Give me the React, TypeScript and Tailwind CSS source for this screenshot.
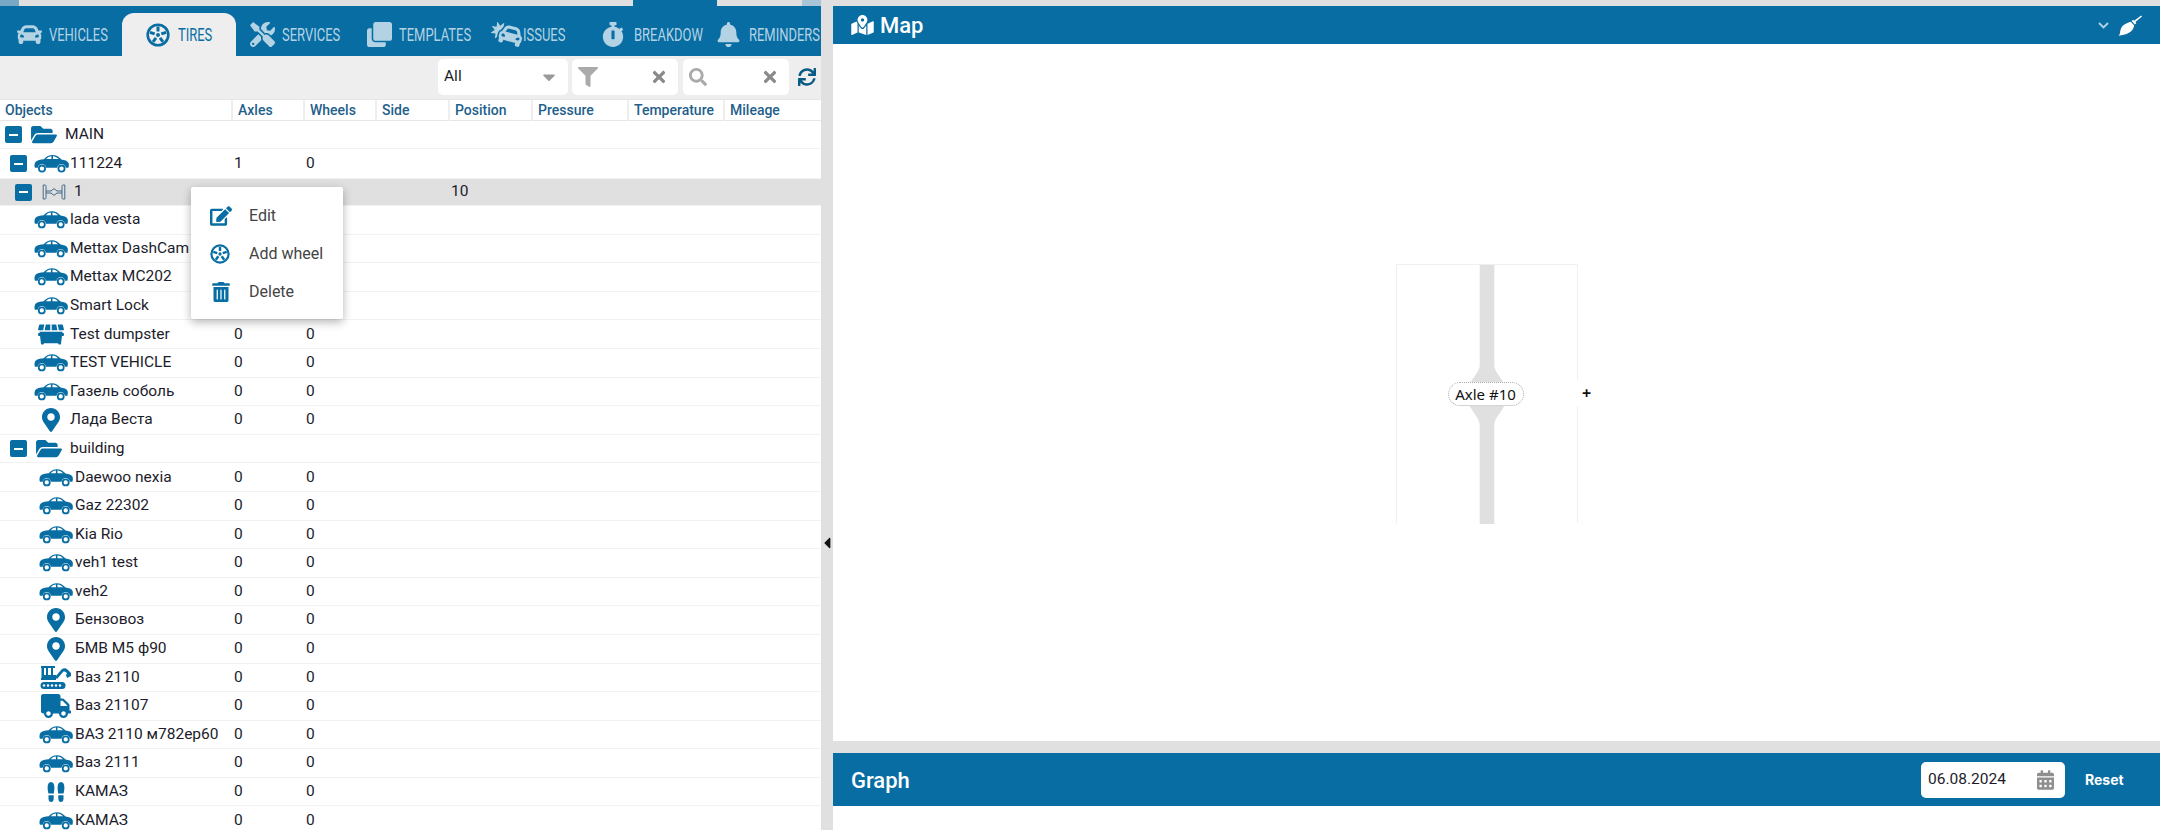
import React from 'react';
import {
  FaCar, FaTools, FaClone, FaCarCrash, FaStopwatch, FaBell, FaFolderOpen, FaFilter, FaSearch, FaTimes,
  FaSync, FaEdit, FaTrashAlt, FaDumpster, FaMapMarkerAlt, FaTruck, FaMapMarkedAlt,
  FaCalendarAlt, FaCaretDown, FaCaretLeft,
} from 'react-icons/fa';

const Wheel = ({ className }: { className?: string }) => (
  <svg viewBox="0 0 24 24" className={className} fill="none" stroke="currentColor">
    <circle cx="12" cy="12" r="10.3" strokeWidth="2.6" />
    <circle cx="12" cy="12" r="2" fill="currentColor" stroke="none" />
    <g strokeWidth="3">
      <path d="M12 3.5V8.5" />
      <path d="M3.9 9.4L8.7 10.9" />
      <path d="M20.1 9.4L15.3 10.9" />
      <path d="M7 18.9L10 14.8" />
      <path d="M17 18.9L14 14.8" />
    </g>
  </svg>
);

const Sedan = () => (
  <svg viewBox="0 0 35 19" className="w-[35px] h-[19px] text-[#076da3]" fill="currentColor">
    <path d="M10 5.2C12.5 2.2 15 1 18.5 1C22 1 24.5 2.4 27.4 5.4C30.6 5.8 33.6 6.8 34.6 9C35 10 35 12 34.4 13.8H31.8C31.2 11.2 29.6 10 27.5 10C25.4 10 23.6 11.2 23.2 13.8H12.2C11.8 11.2 10 10 8 10C6 10 4.2 11.2 3.8 13.8H1C0.2 12.4 0.4 9.6 1.4 8C3 6.2 6.6 5.6 10 5.2Z" />
    <path d="M12 5.1C13.6 3.2 15 2.4 17.4 2.2V5.1ZM19 2.2C21.4 2.4 23.2 3.4 24.8 5.1H19Z" fill="#fff" />
    <circle cx="8" cy="14.6" r="3.1" fill="none" stroke="currentColor" strokeWidth="1.8" />
    <circle cx="27.5" cy="14.6" r="3.1" fill="none" stroke="currentColor" strokeWidth="1.8" />
  </svg>
);

const Axle = () => (
  <svg viewBox="0 0 24 16" className="w-[24px] h-[16px] text-[#3f6a86]" fill="none" stroke="currentColor" strokeWidth="1">
    <path d="M3 1H1.2V15H3C4 15 4 14 4 13V3C4 2 4 1 3 1Z" />
    <path d="M21 1H22.8V15H21C20 15 20 14 20 13V3C20 2 20 1 21 1Z" />
    <path d="M4 7H9L12 4.6L15 7H20M4 9H9L12 11.4L15 9H20" />
  </svg>
);

const Excavator = () => (
  <svg viewBox="0 0 32 24" className="w-[32px] h-[24px] text-[#076da3]" fill="currentColor">
    <path d="M1 1H15V3H13V10H16V15H1V13H1.5V3H1ZM4 3V10H6V3ZM8 3V10H11V3Z" fillRule="evenodd" />
    <path d="M15 12L22 4C24 3 26 3 28 5L31 8V11L27 13L26 10L27 8.5C25.5 6.5 24 6 23 7L17 14Z" />
    <rect x="0.5" y="17" width="25" height="7" rx="3.5" />
    <g fill="#fff">
      <circle cx="4" cy="20.5" r="1.2" />
      <circle cx="8" cy="20.5" r="1.2" />
      <circle cx="12" cy="20.5" r="1.2" />
      <circle cx="16" cy="20.5" r="1.2" />
      <circle cx="20" cy="20.5" r="1.2" />
    </g>
  </svg>
);

const Footprints = () => (
  <svg viewBox="0 0 18 20" className="w-[18px] h-[20px] text-[#076da3]" fill="currentColor">
    <path d="M4 0C6.2 0 7.4 2.4 7.4 5.4C7.4 8 7 10 6.8 11.4H1.4C1.1 9.8 0.6 8 0.6 5.6C0.6 2.4 1.8 0 4 0Z" />
    <path d="M1.5 13.2H6.7V16.4C6.7 18.6 5.6 20 4.1 20C2.6 20 1.5 18.6 1.5 16.4Z" />
    <path d="M14 0C11.8 0 10.6 2.4 10.6 5.4C10.6 8 11 10 11.2 11.4H16.6C16.9 9.8 17.4 8 17.4 5.6C17.4 2.4 16.2 0 14 0Z" />
    <path d="M16.5 13.2H11.3V16.4C11.3 18.6 12.4 20 13.9 20C15.4 20 16.5 18.6 16.5 16.4Z" />
  </svg>
);

const Brush = () => (
  <svg viewBox="0 0 24 21" className="w-[24px] h-[21px] text-white" fill="currentColor">
    <path d="M23.2 0.4L24 1.4L17.4 7L18.4 8.2L16.9 9.6L13.6 6L15.1 4.7L16.1 5.8Z" />
    <path d="M12.8 6.8L16.2 10.6C15.6 14.6 12.4 19.6 0.6 20.8C2.6 18.6 1.6 16.8 3 13.4C4.4 10 8.8 8 12.8 6.8Z" />
  </svg>
);

const tabs = [
  { label: 'VEHICLES', icon: <FaCar className="w-[25px] h-[25px]" />, pad: 'pl-[9px]' },
  { label: 'TIRES', icon: <Wheel className="w-[24px] h-[24px]" />, pad: 'pl-[24px]', active: true },
  { label: 'SERVICES', icon: <FaTools className="w-[25px] h-[25px]" />, pad: 'pl-[14px]' },
  { label: 'TEMPLATES', icon: <FaClone className="w-[25px] h-[25px]" />, pad: 'pl-[17px]' },
  { label: 'ISSUES', icon: <FaCarCrash className="w-[31px] h-[25px]" />, pad: 'pl-[27px]' },
  { label: 'BREAKDOW', icon: <FaStopwatch className="w-[22px] h-[25px]" />, pad: 'pl-[24px]' },
  { label: 'REMINDERS', icon: <FaBell className="w-[23px] h-[25px]" />, pad: 'pl-[25px]' },
];

const columns = ['Objects', 'Axles', 'Wheels', 'Side', 'Position', 'Pressure', 'Temperature', 'Mileage'];
const gridCols = 'grid grid-cols-[233px_72px_72px_73px_83px_96px_96px_96px]';

const marker = <FaMapMarkerAlt className="w-[18px] h-[24px] text-[#076da3]" />;
const folder = <FaFolderOpen className="w-[26px] h-[23px] text-[#076da3]" />;

type Row = {
  name: string;
  icon: React.ReactNode;
  kind: 'main' | 'car' | 'axle' | 'group' | 'leaf' | 'subleaf';
  axles?: string;
  wheels?: string;
  position?: string;
  height?: string;
};

const rows: Row[] = [
  { name: 'MAIN', icon: folder, kind: 'main', height: 'h-[28px]' },
  { name: '111224', icon: <Sedan />, kind: 'car', axles: '1', wheels: '0', height: 'h-[30px]' },
  { name: '1', icon: <Axle />, kind: 'axle', position: '10', height: 'h-[27px]' },
  { name: 'lada vesta', icon: <Sedan />, kind: 'leaf' },
  { name: 'Mettax DashCam', icon: <Sedan />, kind: 'leaf' },
  { name: 'Mettax MC202', icon: <Sedan />, kind: 'leaf' },
  { name: 'Smart Lock', icon: <Sedan />, kind: 'leaf' },
  { name: 'Test dumpster', icon: <FaDumpster className="w-[26px] h-[23px] text-[#076da3]" />, kind: 'leaf', axles: '0', wheels: '0' },
  { name: 'TEST VEHICLE', icon: <Sedan />, kind: 'leaf', axles: '0', wheels: '0' },
  { name: 'Газель соболь', icon: <Sedan />, kind: 'leaf', axles: '0', wheels: '0' },
  { name: 'Лада Веста', icon: marker, kind: 'leaf', axles: '0', wheels: '0' },
  { name: 'building', icon: folder, kind: 'group' },
  { name: 'Daewoo nexia', icon: <Sedan />, kind: 'subleaf', axles: '0', wheels: '0' },
  { name: 'Gaz 22302', icon: <Sedan />, kind: 'subleaf', axles: '0', wheels: '0' },
  { name: 'Kia Rio', icon: <Sedan />, kind: 'subleaf', axles: '0', wheels: '0' },
  { name: 'veh1 test', icon: <Sedan />, kind: 'subleaf', axles: '0', wheels: '0' },
  { name: 'veh2', icon: <Sedan />, kind: 'subleaf', axles: '0', wheels: '0' },
  { name: 'Бензовоз', icon: marker, kind: 'subleaf', axles: '0', wheels: '0' },
  { name: 'БМВ М5 ф90', icon: marker, kind: 'subleaf', axles: '0', wheels: '0' },
  { name: 'Ваз 2110', icon: <Excavator />, kind: 'subleaf', axles: '0', wheels: '0' },
  { name: 'Ваз 21107', icon: <FaTruck className="w-[30px] h-[24px] text-[#076da3]" />, kind: 'subleaf', axles: '0', wheels: '0' },
  { name: 'ВАЗ 2110 м782ер60', icon: <Sedan />, kind: 'subleaf', axles: '0', wheels: '0' },
  { name: 'Ваз 2111', icon: <Sedan />, kind: 'subleaf', axles: '0', wheels: '0' },
  { name: 'КАМАЗ', icon: <Footprints />, kind: 'subleaf', axles: '0', wheels: '0' },
  { name: 'КАМАЗ', icon: <Sedan />, kind: 'subleaf', axles: '0', wheels: '0' },
];

const Toggle = () => (
  <span className="w-[17px] h-[17px] shrink-0 rounded-[2px] bg-[#076da3] flex items-center justify-center">
    <span className="w-[9px] h-[2px] bg-white" />
  </span>
);

const ObjectCell = ({ row }: { row: Row }) => {
  if (row.kind === 'main') {
    return (
      <div className="flex items-center pl-[5px]">
        <Toggle />
        <span className="w-[43px] pl-[9px] flex">{row.icon}</span>
        <span>{row.name}</span>
      </div>
    );
  }
  if (row.kind === 'car') {
    return (
      <div className="flex items-center pl-[10px]">
        <Toggle />
        <span className="w-[43px] pl-[7px] flex">{row.icon}</span>
        <span>{row.name}</span>
      </div>
    );
  }
  if (row.kind === 'axle') {
    return (
      <div className="flex items-center pl-[15px]">
        <Toggle />
        <span className="w-[42px] pl-[10px] flex">{row.icon}</span>
        <span>{row.name}</span>
      </div>
    );
  }
  if (row.kind === 'group') {
    return (
      <div className="flex items-center pl-[10px]">
        <Toggle />
        <span className="w-[43px] pl-[9px] flex">{row.icon}</span>
        <span>{row.name}</span>
      </div>
    );
  }
  return (
    <div className={`flex items-center ${row.kind === 'leaf' ? 'pl-[34px]' : 'pl-[39px]'}`}>
      <span className="w-[36px] flex justify-center pr-[2px]">{row.icon}</span>
      <span className="whitespace-nowrap">{row.name}</span>
    </div>
  );
};

const ContextMenu = () => (
  <div className="absolute left-[191px] top-[181px] w-[152px] h-[132px] bg-white rounded-[2px] shadow-[0_3px_10px_rgba(0,0,0,0.3)] py-[10px] text-[16px] text-[#444]">
    <div className="h-[38px] flex items-center pl-[19px] gap-[17px]">
      <FaEdit className="w-[22px] h-[20px] text-[#076da3]" />
      <span>Edit</span>
    </div>
    <div className="h-[38px] flex items-center pl-[19px] gap-[17px]">
      <Wheel className="w-[20px] h-[20px] text-[#076da3] mr-[2px]" />
      <span>Add wheel</span>
    </div>
    <div className="h-[38px] flex items-center pl-[21px] gap-[19px]">
      <FaTrashAlt className="w-[18px] h-[20px] text-[#076da3]" />
      <span>Delete</span>
    </div>
  </div>
);

const AxleDiagram = () => (
  <div className="relative w-[182px] h-[259px] border border-b-0 border-[#efefef]">
    <svg viewBox="0 0 60 259" className="absolute left-[60px] top-0 w-[60px] h-[259px] text-[#e0e0e0]" fill="currentColor">
      <path d="M22.7 0H37.3V100C37.3 108 46 112 52 130C46 148 37.3 152 37.3 160V259H22.7V160C22.7 152 14 148 8 130C14 112 22.7 108 22.7 100Z" />
    </svg>
    <div className="absolute left-[51px] top-[117px] w-[76px] h-[24px] rounded-full bg-white border border-dotted border-[#aaa] flex items-center justify-center text-[15px] text-[#111] font-['Noto_Sans',sans-serif]">
      Axle #10
    </div>
    <div className="absolute left-[176px] top-[115px] w-[28px] h-[26px] bg-white flex items-center justify-center text-[16px] font-bold text-[#111] font-['Noto_Sans',sans-serif]">
      +
    </div>
  </div>
);

export default function App() {
  return (
    <div className="w-[2160px] h-[830px] overflow-hidden flex flex-col bg-[#e0e0e0] font-['Roboto',sans-serif] text-[#1c1c2b]">
      <div className="h-[6px] shrink-0 flex">
        <div className="w-[19px] bg-[#7aa9c8]" />
        <div className="w-[614px]" />
        <div className="w-[84px] bg-[#076da3]" />
        <div className="w-[85px]" />
        <div className="w-[19px] bg-[#a9c4d6]" />
      </div>
      <div className="flex flex-1 min-h-0">
        {/* Left: objects tree */}
        <div className="relative w-[821px] shrink-0 flex flex-col bg-white overflow-hidden">
          <div className="h-[50px] shrink-0 bg-[#076da3] flex items-end pl-[8px] overflow-hidden">
            {tabs.map((tab) => (
              <div
                key={tab.label}
                className={`w-[114px] h-[43px] shrink-0 flex items-center ${tab.pad} ${tab.active ? 'bg-[#eeeeee] rounded-t-[12px] text-[#076da3]' : 'text-[#b3d3e4]'}`}
              >
                <span className="w-[32px] shrink-0 flex">{tab.icon}</span>
                <span className="w-0 whitespace-nowrap text-[18px] leading-none origin-left scale-x-[0.72]">{tab.label}</span>
              </div>
            ))}
          </div>

          <div className="h-[43px] shrink-0 bg-[#eeeeee] flex items-center justify-end gap-[4px] pr-[5px] pb-[1px]">
            <div className="w-[130px] h-[36px] bg-white rounded-[5px] flex items-center justify-between pl-[6px] pr-[9px] text-[15.5px]">
              <span>All</span>
              <FaCaretDown className="w-[20px] h-[20px] text-[#999]" />
            </div>
            <div className="w-[106px] h-[36px] bg-white rounded-[5px] flex items-center justify-between pl-[6px] pr-[10px]">
              <FaFilter className="w-[20px] h-[20px] text-[#aaa]" />
              <FaTimes className="w-[18px] h-[18px] text-[#8a8a8a]" />
            </div>
            <div className="w-[106px] h-[36px] bg-white rounded-[5px] flex items-center justify-between pl-[6px] pr-[10px] ml-[1px]">
              <FaSearch className="w-[18px] h-[18px] text-[#aaa]" />
              <FaTimes className="w-[18px] h-[18px] text-[#8a8a8a]" />
            </div>
            <FaSync className="w-[18px] h-[18px] text-[#0b5a85] ml-[5px]" />
          </div>

          <div className={`${gridCols} h-[22px] shrink-0 border-y border-[#e6e6e6] text-[14px] font-medium text-[#1f5f8b] items-center`}>
            {columns.map((col, i) => (
              <div key={col} className={`h-full flex items-center pl-[5px] ${i < 7 ? 'border-r-2 border-[#eeeeee]' : ''}`}>
                {col}
              </div>
            ))}
          </div>

          {rows.map((row, i) => (
            <div
              key={i}
              className={`${gridCols} ${row.height ?? 'h-[28.6px]'} shrink-0 items-center text-[15.5px] border-b border-[#f2f2f2] ${row.kind === 'axle' ? 'bg-[#e0e0e0]' : ''}`}
            >
              <ObjectCell row={row} />
              <div className="pl-[1px]">{row.axles}</div>
              <div className="pl-[1px]">{row.wheels}</div>
              <div />
              <div className="pl-[1px]">{row.position}</div>
            </div>
          ))}

          <ContextMenu />
        </div>

        {/* Divider */}
        <div className="w-[12px] shrink-0 flex justify-center pt-[528px]">
          <FaCaretLeft className="w-[12px] h-[18px] text-[#111]" />
        </div>

        {/* Right: map and graph */}
        <div className="flex-1 flex flex-col min-w-0">
          <div className="h-[38px] shrink-0 bg-[#076da3] flex items-center pl-[18px] pr-[18px] text-white">
            <FaMapMarkedAlt className="w-[23px] h-[20px]" />
            <span className="ml-[6px] text-[22px] font-medium">Map</span>
            <svg viewBox="0 0 11 7" className="ml-auto w-[11px] h-[7px] text-[#b3d3e4]" fill="none" stroke="currentColor" strokeWidth="1.8">
              <path d="M1 1L5.5 5.5L10 1" />
            </svg>
            <span className="ml-[9px] flex"><Brush /></span>
          </div>
          <div className="h-[697px] shrink-0 bg-white flex justify-center pt-[220px] pr-[20px]">
            <AxleDiagram />
          </div>
          <div className="h-[12px] shrink-0" />
          <div className="h-[53px] shrink-0 bg-[#076da3] flex items-center pl-[18px] text-white">
            <span className="text-[22px] font-medium pt-[2px]">Graph</span>
            <div className="ml-auto w-[144px] h-[36px] bg-white rounded-[5px] flex items-center justify-between pl-[7px] pr-[11px] text-[15.5px] text-[#1c1c2b]">
              <span>06.08.2024</span>
              <FaCalendarAlt className="w-[17px] h-[20px] text-[#8f8f8f]" />
            </div>
            <span className="w-[95px] pl-[20px] text-[14px] font-bold font-['Inter',sans-serif]">Reset</span>
          </div>
          <div className="flex-1 bg-white" />
        </div>
      </div>
    </div>
  );
}
